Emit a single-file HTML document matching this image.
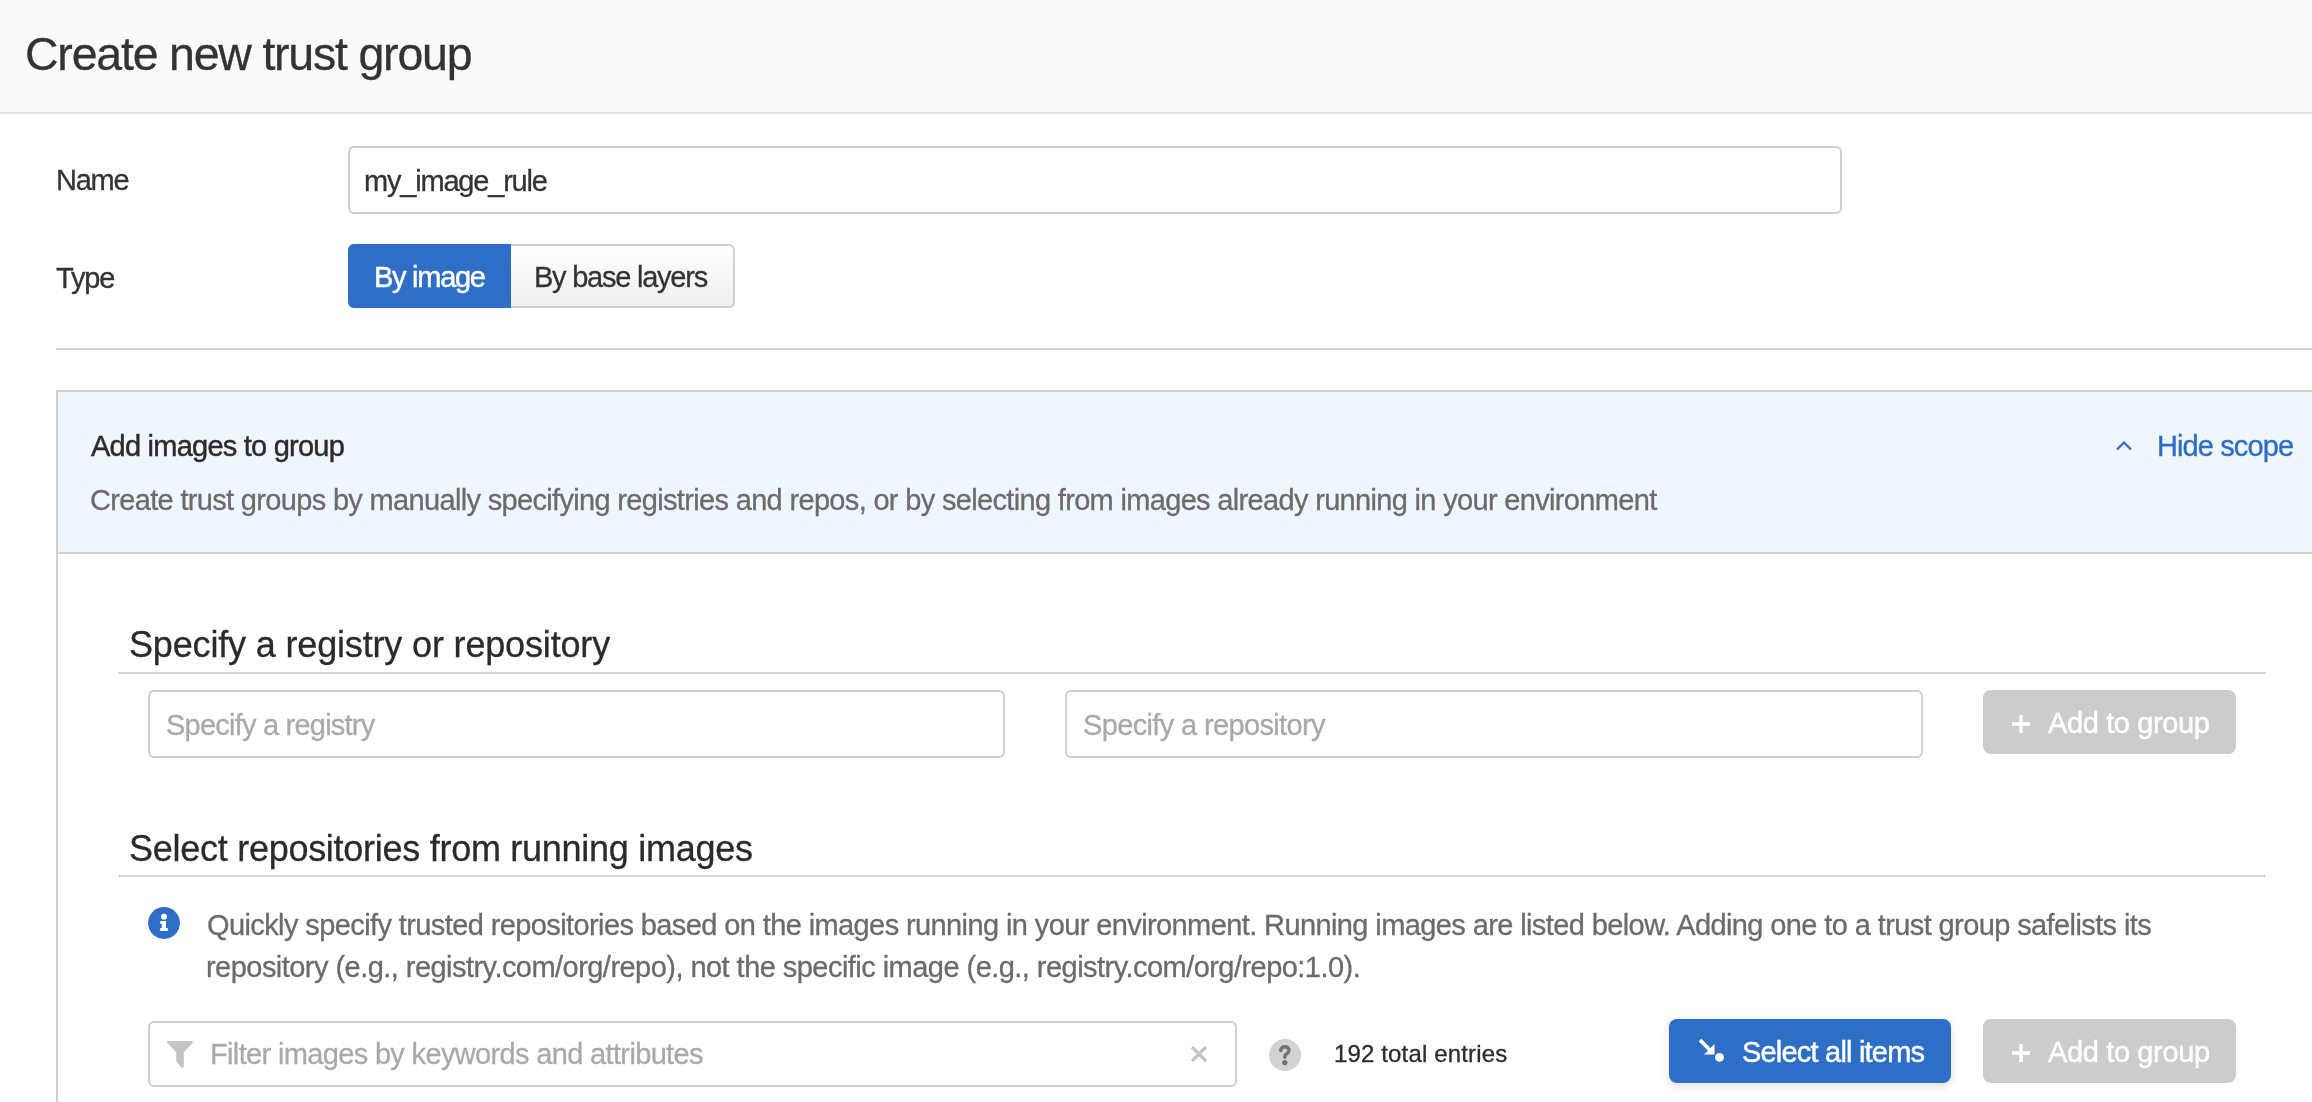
<!DOCTYPE html>
<html><head><meta charset="utf-8"><title>Create new trust group</title><style>
html,body{margin:0;padding:0;width:2312px;height:1102px;overflow:hidden;background:#fff;}
body{position:relative;font-family:"Liberation Sans",sans-serif;color:#333;}
.t{position:absolute;white-space:nowrap;line-height:1;}
.b{position:absolute;box-sizing:border-box;}
.inp{position:absolute;box-sizing:border-box;border:2px solid #cfcfcf;border-radius:6px;background:#fff;}
.gbtn{position:absolute;box-sizing:border-box;background:#cccccc;border-radius:8px;}
.t{will-change:transform;}
</style></head><body>

<!-- header -->
<div class="b" style="left:0;top:0;width:2312px;height:112px;background:#fafafa;"></div>
<div class="b" style="left:0;top:112px;width:2312px;height:2px;background:#e3e3e3;"></div>

<!-- name row -->
<div class="inp" style="left:348px;top:146px;width:1494px;height:68px;"></div>

<!-- type row -->
<div class="b" style="left:348px;top:244px;width:163px;height:64px;background:#2e6ec6;border-radius:6px 0 0 6px;"></div>
<div class="b" style="left:511px;top:244px;width:224px;height:64px;border:2px solid #cfcfcf;border-left:none;border-radius:0 6px 6px 0;background:linear-gradient(#ffffff,#efefef);"></div>

<!-- hr -->
<div class="b" style="left:56px;top:348px;width:2256px;height:2px;background:#d3d8dd;"></div>

<!-- panel -->
<div class="b" style="left:56px;top:390px;width:2256px;height:712px;border-left:2px solid #d0d0d0;border-top:2px solid #d0d0d0;"></div>
<div class="b" style="left:58px;top:392px;width:2254px;height:160px;background:#eff6fe;"></div>
<div class="b" style="left:58px;top:552px;width:2254px;height:2px;background:#d0d0d0;"></div>
<svg class="b" style="left:2112px;top:438px;" width="24" height="16" viewBox="0 0 24 16"><path d="M5 11.5 L12 4.5 L19 11.5" fill="none" stroke="#2d6cc4" stroke-width="2.2"/></svg>

<!-- specify section -->
<div class="b" style="left:118px;top:672px;width:2148px;height:2px;background:#d3d8dd;"></div>
<div class="inp" style="left:148px;top:690px;width:857px;height:68px;"></div>
<div class="inp" style="left:1065px;top:690px;width:858px;height:68px;"></div>
<div class="gbtn" style="left:1983px;top:690px;width:253px;height:64px;"></div>
<svg class="b" style="left:2010px;top:713px;" width="22" height="22" viewBox="0 0 22 22"><path d="M11 2 V20 M2 11 H20" stroke="#fff" stroke-width="3.5"/></svg>

<!-- select section -->
<div class="b" style="left:118px;top:875px;width:2148px;height:2px;background:#d3d8dd;"></div>
<svg class="b" style="left:148px;top:907px;" width="32" height="32" viewBox="0 0 32 32"><circle cx="16" cy="16" r="15.9" fill="#2e6ec6"/><circle cx="16" cy="9.7" r="3" fill="#fff"/><path d="M12.2 13.9 H18 V21 H19.8 V24 H12.2 V21 H13.8 V16.8 H12.2 Z" fill="#fff"/></svg>

<!-- filter row -->
<div class="inp" style="left:148px;top:1021px;width:1089px;height:66px;"></div>
<svg class="b" style="left:166px;top:1040px;" width="28" height="30" viewBox="0 0 28 30"><path d="M1.5 1.9 H26.2 L17 12.2 V26.6 L16.3 27.2 L11.1 21.5 V12.2 Z" fill="#c4c4c4" stroke="#c4c4c4" stroke-width="1.6" stroke-linejoin="round"/></svg>
<svg class="b" style="left:1189px;top:1044px;" width="20" height="20" viewBox="0 0 20 20"><path d="M3 3 L17 17 M17 3 L3 17" stroke="#c4c4c4" stroke-width="3.2"/></svg>
<svg class="b" style="left:1268px;top:1038px;" width="34" height="34" viewBox="0 0 34 34"><circle cx="17" cy="17" r="16" fill="#d2d2d2"/><path d="M12.7 12.4 C13.1 9.9 14.8 8.7 17 8.7 C19.4 8.7 21 10.2 21 12.3 C21 14.9 18.4 15.6 17.2 17.4 L16.9 19.2" fill="none" stroke="#727272" stroke-width="3.5" stroke-linecap="round"/><circle cx="16.8" cy="24.6" r="2.6" fill="#727272"/></svg>

<div class="b" style="left:1669px;top:1019px;width:282px;height:64px;background:#2e6ec6;border-radius:8px;box-shadow:0 3px 8px rgba(0,0,0,0.14);"></div>
<svg class="b" style="left:1696px;top:1036px;" width="32" height="28" viewBox="0 0 32 28"><path d="M4 4 L15 15" stroke="#fff" stroke-width="3.8"/><path d="M18.5 8 V18.5 H8 Z" fill="#fff"/><circle cx="23.5" cy="21.4" r="4.4" fill="#fff"/></svg>

<div class="gbtn" style="left:1983px;top:1019px;width:253px;height:64px;"></div>
<svg class="b" style="left:2010px;top:1042px;" width="22" height="22" viewBox="0 0 22 22"><path d="M11 2 V20 M2 11 H20" stroke="#fff" stroke-width="3.5"/></svg>

<div id="title" class="t" style="left:25.40px;top:31px;font-size:46.5px;color:#333;letter-spacing:-1.212px;-webkit-text-stroke:0.3px #333;">Create new trust group</div>
<div id="name" class="t" style="left:55.50px;top:166px;font-size:29px;color:#333;letter-spacing:-1.233px;-webkit-text-stroke:0.3px #333;">Name</div>
<div id="val" class="t" style="left:364.00px;top:167px;font-size:29px;color:#333;letter-spacing:-1.196px;-webkit-text-stroke:0.3px #333;">my_image_rule</div>
<div id="type" class="t" style="left:56.00px;top:264px;font-size:29px;color:#333;letter-spacing:-1.136px;-webkit-text-stroke:0.3px #333;">Type</div>
<div id="byimg" class="t" style="left:373.50px;top:263px;font-size:29px;color:#fff;letter-spacing:-1.272px;-webkit-text-stroke:0.45px #fff;">By image</div>
<div id="bybase" class="t" style="left:534.00px;top:263px;font-size:29px;color:#333;letter-spacing:-1.231px;-webkit-text-stroke:0.3px #333;">By base layers</div>
<div id="addimg" class="t" style="left:90.60px;top:432px;font-size:29px;color:#2b2b2b;letter-spacing:-0.764px;-webkit-text-stroke:0.45px #2b2b2b;">Add images to group</div>
<div id="sub" class="t" style="left:90.00px;top:486px;font-size:29px;color:#6b6b6b;letter-spacing:-0.669px;-webkit-text-stroke:0.3px #6b6b6b;">Create trust groups by manually specifying registries and repos, or by selecting from images already running in your environment</div>
<div id="hide" class="t" style="left:2157.00px;top:432px;font-size:29px;color:#2d6cc4;letter-spacing:-0.889px;-webkit-text-stroke:0.3px #2d6cc4;">Hide scope</div>
<div id="h1" class="t" style="left:129.00px;top:627px;font-size:36px;color:#2b2b2b;letter-spacing:-0.161px;-webkit-text-stroke:0.3px #2b2b2b;">Specify a registry or repository</div>
<div id="ph1" class="t" style="left:166.00px;top:711px;font-size:29px;color:#a9a9a9;letter-spacing:-0.774px;-webkit-text-stroke:0.3px #a9a9a9;">Specify a registry</div>
<div id="ph2" class="t" style="left:1083.00px;top:711px;font-size:29px;color:#a9a9a9;letter-spacing:-0.643px;-webkit-text-stroke:0.3px #a9a9a9;">Specify a repository</div>
<div id="add1" class="t" style="left:2048.20px;top:709px;font-size:29px;color:#fff;letter-spacing:-0.379px;-webkit-text-stroke:0.45px #fff;">Add to group</div>
<div id="h2" class="t" style="left:128.60px;top:831px;font-size:36px;color:#2b2b2b;letter-spacing:-0.271px;-webkit-text-stroke:0.3px #2b2b2b;">Select repositories from running images</div>
<div id="p1" class="t" style="left:207.00px;top:911px;font-size:29px;color:#6b6b6b;letter-spacing:-0.604px;-webkit-text-stroke:0.3px #6b6b6b;">Quickly specify trusted repositories based on the images running in your environment. Running images are listed below. Adding one to a trust group safelists its</div>
<div id="p2" class="t" style="left:206.00px;top:953px;font-size:29px;color:#6b6b6b;letter-spacing:-0.541px;-webkit-text-stroke:0.3px #6b6b6b;">repository (e.g., registry.com/org/repo), not the specific image (e.g., registry.com/org/repo:1.0).</div>
<div id="ph3" class="t" style="left:209.50px;top:1040px;font-size:29px;color:#a9a9a9;letter-spacing:-0.654px;-webkit-text-stroke:0.3px #a9a9a9;">Filter images by keywords and attributes</div>
<div id="total" class="t" style="left:1333.80px;top:1042px;font-size:24px;color:#2b2b2b;letter-spacing:0.147px;-webkit-text-stroke:0.3px #2b2b2b;">192 total entries</div>
<div id="selall" class="t" style="left:1742.00px;top:1038px;font-size:29px;color:#fff;letter-spacing:-0.800px;-webkit-text-stroke:0.45px #fff;">Select all items</div>
<div id="add2" class="t" style="left:2048.00px;top:1038px;font-size:29px;color:#fff;letter-spacing:-0.364px;-webkit-text-stroke:0.45px #fff;">Add to group</div>
</body></html>
